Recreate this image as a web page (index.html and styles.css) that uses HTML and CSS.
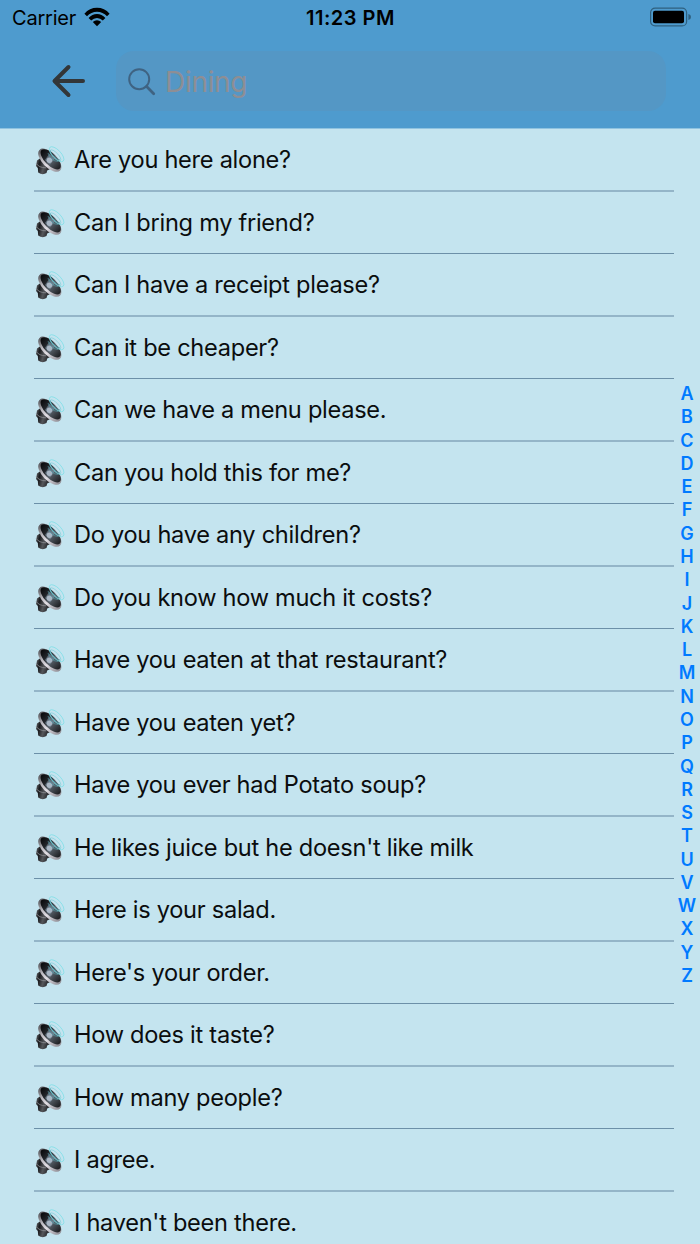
FILE: index.html
```html
<!DOCTYPE html>
<html lang="en">
<head>
<meta charset="utf-8">
<meta name="viewport" content="width=device-width, initial-scale=1.0">
<link rel="stylesheet" href="styles.css">
<title>Dining</title>
</head>
<body>
  <!-- Shared speaker icon -->
  <svg class="defs" width="0" height="0">
    <defs>
      <linearGradient id="body" x1="0" y1="0" x2="1" y2="0.3">
        <stop offset="0" stop-color="#77797d"/>
        <stop offset="0.3" stop-color="#17181b"/>
        <stop offset="0.6" stop-color="#55575b"/>
        <stop offset="1" stop-color="#1b1b1e"/>
      </linearGradient>
      <linearGradient id="rim" x1="0" y1="0" x2="1" y2="0">
        <stop offset="0" stop-color="#55555a"/>
        <stop offset="0.3" stop-color="#b9b7bd"/>
        <stop offset="0.55" stop-color="#e2dfe5"/>
        <stop offset="1" stop-color="#8d8a91"/>
      </linearGradient>
      <linearGradient id="cone" x1="0" y1="0" x2="1" y2="0">
        <stop offset="0" stop-color="#08090b"/>
        <stop offset="0.35" stop-color="#26292e"/>
        <stop offset="0.55" stop-color="#59626b"/>
        <stop offset="1" stop-color="#1c1d20"/>
      </linearGradient>
      <symbol id="speaker" viewBox="0 0 32 32">
        <path d="M3 15.5 L8 12 L18 23 L13.2 25.5 L12.5 28 Q8.5 30.5 4.2 27.5 L3.8 23 L2 21 Z" fill="url(#body)"/>
        <path d="M2.2 18.5 Q5 22.8 12 22.8" fill="none" stroke="#8a8c91" stroke-width="0.8"/>
        <ellipse cx="15.8" cy="15.2" rx="14.6" ry="7.4" transform="rotate(45 15.8 15.2)" fill="url(#rim)"/>
        <ellipse cx="16.7" cy="14.3" rx="13" ry="6" transform="rotate(45 16.7 14.3)" fill="url(#cone)"/>
        <path d="M11 15 L15.5 8.5 L20.5 14 L16 19.5 Z" fill="#8498a8" opacity="0.6"/>
        <circle cx="15.4" cy="15.2" r="2.7" fill="#a9b6c4"/>
        <path d="M14 8 Q17 16 24 16.5 M16 5 Q18 12.5 26 15" fill="none" stroke="#4d9aa6" stroke-width="0.7"/>
        <ellipse cx="22.6" cy="9.2" rx="9.6" ry="4.2" transform="rotate(46 22.6 9.2)" fill="none" stroke="#82dfe8" stroke-width="0.8"/>
        <ellipse cx="21.4" cy="10.4" rx="7.3" ry="2.7" transform="rotate(46 21.4 10.4)" fill="none" stroke="#6cc4d0" stroke-width="0.5"/>
      </symbol>
    </defs>
  </svg>

  <div class="header">
    <div class="status-bar">
      <div class="carrier">
        <span>Carrier</span>
        <svg class="wifi" width="26" height="20" viewBox="0 0 26 20">
          <path d="M0.4 6.7 Q5.5 0.8 13 0.8 Q20.5 0.8 25.6 6.7 L23 9.3 Q18.8 4.8 13 4.8 Q7.2 4.8 3 9.3 Z"/>
          <path d="M4.6 10.9 Q8.2 7.1 13 7.1 Q17.8 7.1 21.4 10.9 L18.8 13.5 Q16.3 10.9 13 10.9 Q9.7 10.9 7.2 13.5 Z"/>
          <path d="M8.8 15.1 Q10.7 13.3 13 13.3 Q15.3 13.3 17.2 15.1 L13 19.3 Z"/>
        </svg>
      </div>
      <div class="time">11:23 PM</div>
      <div class="battery">
        <svg width="42" height="20" viewBox="0 0 42 20">
          <rect x="0.6" y="1.1" width="36" height="17.8" rx="4.5" fill="none" stroke="#2f607f" stroke-width="1.2"/>
          <rect x="3" y="3.8" width="31" height="12.4" rx="2"/>
          <path d="M38.4 7 Q41 7.6 41 10 Q41 12.4 38.4 13 Z" fill="#2f607f"/>
        </svg>
      </div>
    </div>
    <div class="nav-bar">
      <svg class="back" width="36" height="36" viewBox="0 0 36 36">
        <path d="M18.5 4 L4.5 18 L18.5 32 M5 18 H33"/>
      </svg>
      <div class="search">
        <svg width="28" height="28" viewBox="0 0 28 28">
          <circle cx="11.2" cy="11.2" r="10"/>
          <path class="handle" d="M18.6 18.6 L25.7 25.7"/>
        </svg>
        <span>Dining</span>
      </div>
    </div>
  </div>

  <div class="content">
    <ul class="phrases">
      <li><svg class="icon"><use href="#speaker"/></svg><span>Are you here alone?</span></li>
      <li><svg class="icon"><use href="#speaker"/></svg><span>Can I bring my friend?</span></li>
      <li><svg class="icon"><use href="#speaker"/></svg><span>Can I have a receipt please?</span></li>
      <li><svg class="icon"><use href="#speaker"/></svg><span>Can it be cheaper?</span></li>
      <li><svg class="icon"><use href="#speaker"/></svg><span>Can we have a menu please.</span></li>
      <li><svg class="icon"><use href="#speaker"/></svg><span>Can you hold this for me?</span></li>
      <li><svg class="icon"><use href="#speaker"/></svg><span>Do you have any children?</span></li>
      <li><svg class="icon"><use href="#speaker"/></svg><span>Do you know how much it costs?</span></li>
      <li><svg class="icon"><use href="#speaker"/></svg><span>Have you eaten at that restaurant?</span></li>
      <li><svg class="icon"><use href="#speaker"/></svg><span>Have you eaten yet?</span></li>
      <li><svg class="icon"><use href="#speaker"/></svg><span>Have you ever had Potato soup?</span></li>
      <li><svg class="icon"><use href="#speaker"/></svg><span>He likes juice but he doesn't like milk</span></li>
      <li><svg class="icon"><use href="#speaker"/></svg><span>Here is your salad.</span></li>
      <li><svg class="icon"><use href="#speaker"/></svg><span>Here's your order.</span></li>
      <li><svg class="icon"><use href="#speaker"/></svg><span>How does it taste?</span></li>
      <li><svg class="icon"><use href="#speaker"/></svg><span>How many people?</span></li>
      <li><svg class="icon"><use href="#speaker"/></svg><span>I agree.</span></li>
      <li><svg class="icon"><use href="#speaker"/></svg><span>I haven't been there.</span></li>
    </ul>
    <div class="letters">
      <span>A</span><span>B</span><span>C</span><span>D</span><span>E</span><span>F</span><span>G</span>
      <span>H</span><span>I</span><span>J</span><span>K</span><span>L</span><span>M</span><span>N</span>
      <span>O</span><span>P</span><span>Q</span><span>R</span><span>S</span><span>T</span><span>U</span>
      <span>V</span><span>W</span><span>X</span><span>Y</span><span>Z</span>
    </div>
  </div>
</body>
</html>
```

FILE: styles.css
```css
* { box-sizing: border-box; }
body {
  font-family: Inter, "Liberation Sans", sans-serif;
  margin: 0;
  height: 1244px;
  overflow: hidden;
  background: #c4e4ef;
  color: #0b0d0e;
}
.defs { display: block; }
.header {
  height: 129px;
  background: #4e9bce;
  border-bottom: 1px solid #8fc3e0;
}
.status-bar {
  display: grid;
  grid-template-columns: 1fr auto 1fr;
  align-items: center;
  height: 36px;
  padding: 0 8px 0 12px;
  font-size: 20px;
  color: #000;
}
.carrier {
  display: flex;
  align-items: center;
  gap: 8px;
  letter-spacing: -0.2px;
}
.wifi { margin-top: -3px; }
.time {
  font-weight: 600;
  letter-spacing: 0.5px;
  margin-right: 3px;
}
.battery {
  display: flex;
  justify-content: flex-end;
  margin-top: -2px;
}
.nav-bar {
  display: flex;
  align-items: center;
  height: 60px;
  margin-top: 15px;
  padding: 0 34px 0 50px;
}
.back {
  fill: none;
  stroke: #333638;
  stroke-width: 4;
  stroke-linecap: round;
  stroke-linejoin: round;
}
.search {
  display: flex;
  align-items: center;
  flex: 1;
  gap: 9px;
  height: 60px;
  margin-left: 30px;
  padding: 1px 0 0 12px;
  border-radius: 18px;
  background: #5497c5;
  color: #8e8e94;
  font-size: 28px;
  letter-spacing: -0.3px;
}
.search svg {
  fill: none;
  stroke: #3f6382;
  stroke-width: 2;
  stroke-linecap: round;
}
.search .handle { stroke-width: 2.8; }
.content {
  display: flex;
  height: 1115px;
}
.phrases {
  list-style: none;
  width: 640px;
  margin: 0 0 0 34px;
  padding: 0;
}
.phrases li {
  display: flex;
  align-items: center;
  height: 63px;
  gap: 8px;
  border-bottom: 2px solid #94b5c8;
  font-size: 23.6px;
  letter-spacing: -0.28px;
  white-space: nowrap;
}
.phrases li:nth-child(even) {
  height: 62px;
  border-bottom: 1px solid #6c90a8;
}
.icon {
  width: 32px;
  height: 32px;
  margin-top: 3px;
}
.letters {
  display: flex;
  flex-direction: column;
  width: 26px;
  margin-top: 253px;
  text-align: center;
  font-size: 18px;
  font-weight: 600;
  line-height: 23.28px;
  color: #007aff;
}
```
